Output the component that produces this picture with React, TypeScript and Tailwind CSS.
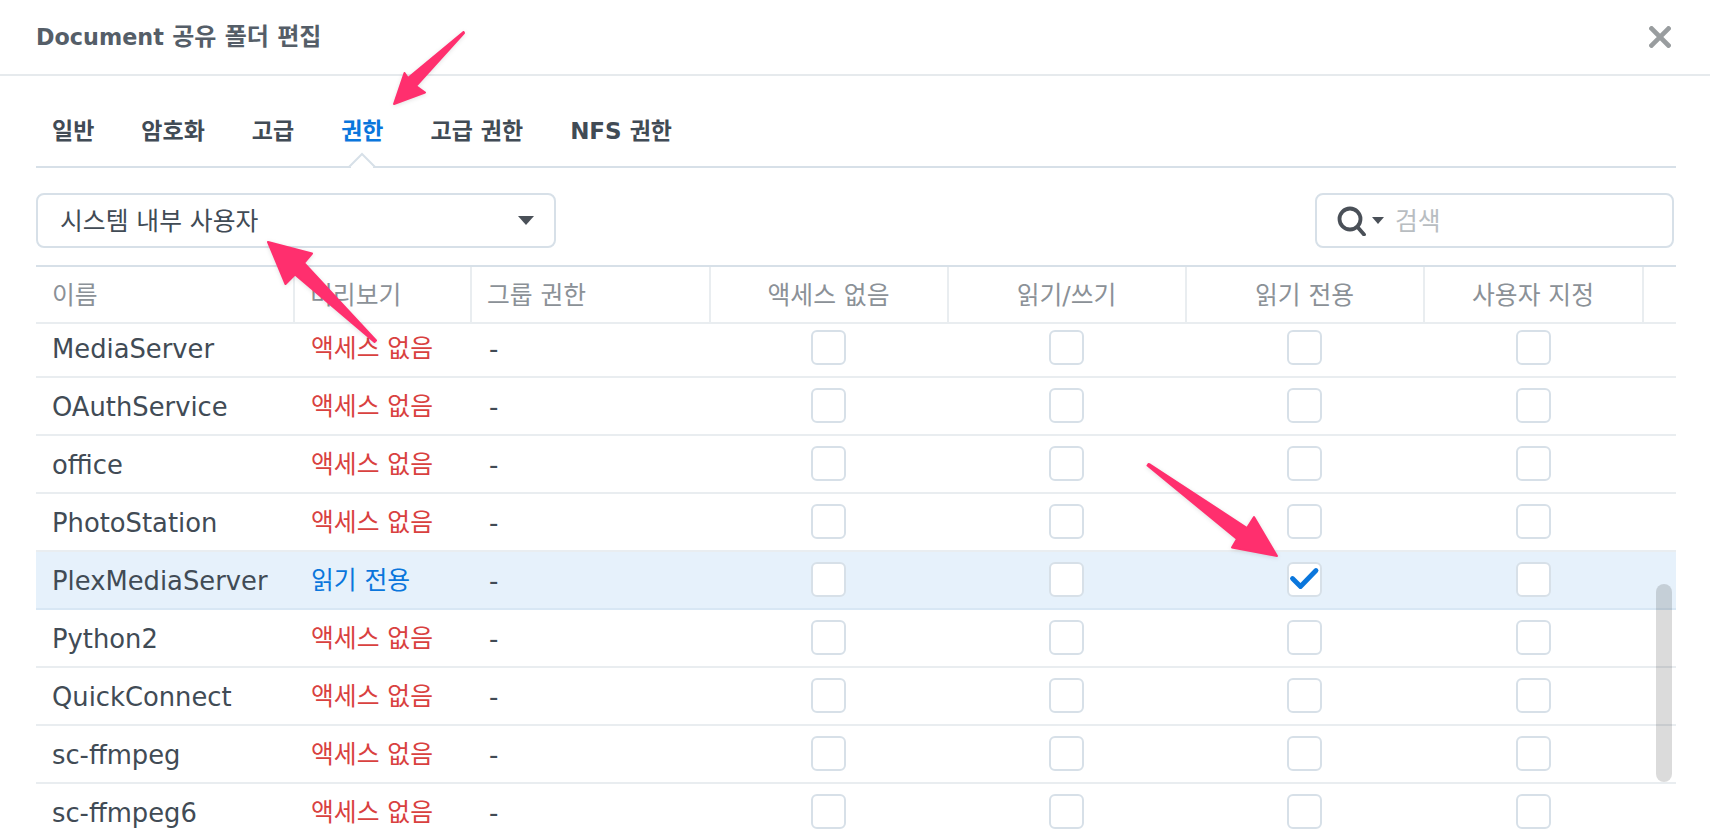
import React from "react";

const NAMES: [string, boolean][] = [
  ["MediaServer", false],
  ["OAuthService", false],
  ["office", false],
  ["PhotoStation", false],
  ["PlexMediaServer", true],
  ["Python2", false],
  ["QuickConnect", false],
  ["sc-ffmpeg", false],
  ["sc-ffmpeg6", false],
];

const GRID = "grid grid-cols-[258px_177px_239px_238px_238px_238px_219px_33px]";

function Box({ checked }: { checked?: boolean }) {
  return (
    <div className="w-[35px] h-[35px] rounded-[6px] border-2 border-[#d7e0e8] bg-white flex items-center justify-center">
      {checked && (
        <svg width="31" height="31" viewBox="0 0 31 31" fill="none">
          <path d="M3.5 14.5 L11.5 22.5 L27 6.5" stroke="#0a76dc" strokeWidth="4.8" strokeLinecap="round" strokeLinejoin="round" />
        </svg>
      )}
    </div>
  );
}

function Row({ name, active }: { name: string; active: boolean }) {
  return (
    <div className={`${GRID} h-[58px] items-center border-b-2 ${active ? "bg-[#e6f1fb] border-[#d8e7f4]" : "border-[#e9edf0]"}`}>
      <div className="pl-[16px] pt-[3px] text-[25.8px] text-[#414b55]">{name}</div>
      <div className={`pl-[17px] pt-[2px] ${active ? "text-[#0a76dc]" : "text-[#d9413f]"}`}>{active ? "읽기 전용" : "액세스 없음"}</div>
      <div className="pl-[18px] pt-[2px] font-medium text-[26px] text-[#414b55]">-</div>
      {[0, 1, 2, 3].map((i) => (
        <div key={i} className="flex justify-center pr-[1px] pb-[2px]">
          <Box checked={active && i === 2} />
        </div>
      ))}
      <div />
    </div>
  );
}

function Head({ children, center, border = true }: { children?: React.ReactNode; center?: boolean; border?: boolean }) {
  return (
    <div className={`h-full flex items-center pt-[2px] -mr-[1px] ${center ? "justify-center" : "pl-[16px]"} ${border ? "border-r-2 border-[#e9edf0]" : ""}`}>
      {children}
    </div>
  );
}

const TABS = ["일반", "암호화", "고급", "권한", "고급 권한", "NFS 권한"];

export default function App() {
  return (
    <div
      className="relative w-[1710px] h-[840px] overflow-hidden bg-white text-[24.8px]"
      style={{ fontFamily: '"DejaVu Sans", "Noto Sans CJK KR", sans-serif' }}
    >
      <header className="h-[76px] border-b-2 border-[#e6eaed] flex items-center justify-between pl-[36px] pr-[39px]">
        <h1 className="text-[24px] font-bold text-[#555e68] leading-[36px]">
          <span className="text-[22.3px]">Document</span> 공유 폴더 편집
        </h1>
        <svg width="22" height="22" viewBox="0 0 22 22">
          <path d="M2.5 2.5 L19.5 19.5 M19.5 2.5 L2.5 19.5" stroke="#999d9f" strokeWidth="4.6" strokeLinecap="square" />
        </svg>
      </header>

      <div className="px-[36px] w-[1712px]">
        <nav className="relative h-[92px] border-b-2 border-[#d7e0e8] flex gap-[47px] pl-[16px] pt-[37px] text-[23px] font-bold text-[#414b55] leading-[36px]">
          {TABS.map((t) => (
            <span key={t} className={t === "권한" ? "text-[#0a76dc]" : ""}>
              {t}
            </span>
          ))}
          <svg className="absolute left-[312px] bottom-[-2px]" width="28" height="16" viewBox="0 0 28 16">
            <path d="M1 15 L14 2 L27 15" fill="white" stroke="#d7e0e8" strokeWidth="2" />
            <path d="M3 16 L25 16" stroke="white" strokeWidth="2" />
          </svg>
        </nav>

        <div className="flex justify-between mt-[25px] pr-[2px]">
          <div className="w-[520px] h-[55px] rounded-[8px] border-2 border-[#d7e0e8] flex items-center justify-between pl-[22px] pr-[20px] text-[#414b55]">
            <span className="pt-[2px]">시스템 내부 사용자</span>
            <svg width="16" height="9" viewBox="0 0 16 9">
              <path d="M0 0 H16 L8 9 Z" fill="#4a5058" />
            </svg>
          </div>
          <div className="w-[359px] h-[55px] rounded-[8px] border-2 border-[#d7e0e8] flex items-center pl-[20px] text-[#b8bdc1]">
            <svg width="30" height="30" viewBox="0 0 30 30" fill="none">
              <circle cx="13" cy="13" r="10.5" stroke="#4a5058" strokeWidth="3.8" />
              <path d="M20.5 21 L27 28.5" stroke="#4a5058" strokeWidth="3.8" strokeLinecap="round" />
            </svg>
            <svg className="ml-[5px] mr-[11px]" width="12" height="7" viewBox="0 0 12 7">
              <path d="M0 0 H12 L6 7 Z" fill="#4a5058" />
            </svg>
            <span className="pt-[2px]">검색</span>
          </div>
        </div>

        <div className={`${GRID} h-[59px] mt-[17px] border-t-2 border-b-2 border-t-[#d7e0e8] border-b-[#e9edf0] text-[#8b9197]`}>
          <Head>이름</Head>
          <Head>미리보기</Head>
          <Head>그룹 권한</Head>
          <Head center>액세스 없음</Head>
          <Head center>읽기/쓰기</Head>
          <Head center>읽기 전용</Head>
          <Head center>사용자 지정</Head>
          <Head border={false} />
        </div>

        <div className="h-[520px] overflow-hidden">
          <div className="-mt-[4px]">
            {NAMES.map(([n, a]) => (
              <Row key={n} name={n} active={a} />
            ))}
          </div>
        </div>
      </div>

      <div className="absolute left-[1656px] top-[584px] w-[16px] h-[198px] rounded-full bg-[#00000024]" />

      <svg className="absolute inset-0 pointer-events-none drop-shadow-[0_1px_2px_rgba(0,0,0,0.12)]" width="1710" height="840" viewBox="0 0 1710 840">
        <g fill="#ff2f6e" stroke="#ff2f6e" strokeWidth="2" strokeLinejoin="round">
          <path d="M463.5 32 L464 33 L416 86 L425 92.5 L394 104 L404.5 73 L408 78 Z" />
          <path d="M268 242 L312 253.5 L304 263 L376 340.5 L374.5 342 L295 274.5 L285.5 284 Z" />
          <path d="M1148.5 464 L1150 464.5 L1247 528 L1254 517 L1277 556 L1232 547.5 L1237 539 L1147.5 465.5 Z" />
        </g>
      </svg>
    </div>
  );
}
